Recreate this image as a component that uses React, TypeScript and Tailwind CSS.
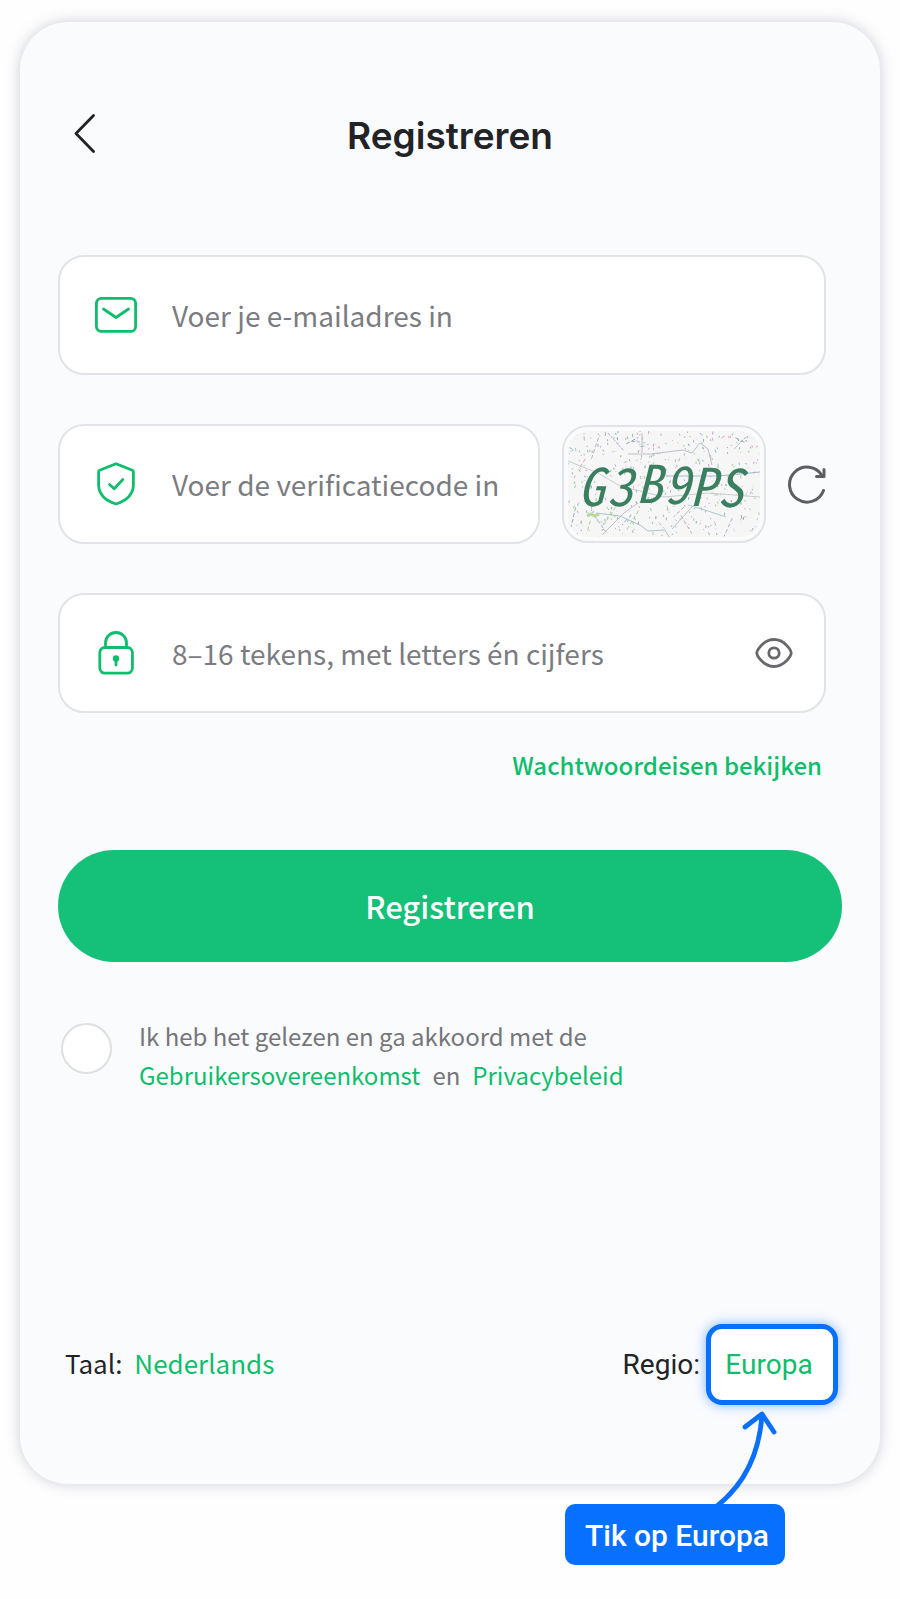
import { useMemo, useState } from 'react';
import type { ReactNode } from 'react';

const CAPTCHA_CODE = 'G3B9PS';
const SPECK_COLORS = ['#8fc7b4', '#b9a8cf', '#b3b8bd', '#8fb6c4', '#d3a9bf', '#a9cf9b', '#8aa39e'];

// small seeded generator so the noise stays the same between renders
function createRandom(seed: number) {
  let state = seed;
  return () => {
    state = (state * 1664525 + 1013904223) % 4294967296;
    return state / 4294967296;
  };
}

function MailIcon() {
  return (
    <svg className="h-11 w-11" viewBox="0 0 44 44" fill="none" stroke="currentColor" strokeWidth="2.8" strokeLinecap="round" strokeLinejoin="round">
      <rect x="2.4" y="5.4" width="39.2" height="33" rx="5" />
      <path d="M9.5 16 L22 24.5 L34.5 16" />
    </svg>
  );
}

function ShieldIcon() {
  return (
    <svg className="h-11 w-11" viewBox="0 0 44 44" fill="none" stroke="currentColor" strokeWidth="2.8" strokeLinecap="round" strokeLinejoin="round">
      <path d="M22 1.8 L38.4 8.2 Q39.4 8.8 39.4 10 V22.5 C39.4 32 33 38.5 22 42 C11 38.5 4.6 32 4.6 22.5 V10 Q4.6 8.8 5.6 8.2 Z" />
      <path d="M15.5 22.5 L20.2 26.8 L28.8 17.5" />
    </svg>
  );
}

function LockIcon() {
  return (
    <svg className="h-11 w-11" viewBox="0 0 44 44" fill="none" stroke="currentColor" strokeWidth="2.8" strokeLinecap="round" strokeLinejoin="round">
      <path d="M11.5 16.5 V12 A10.5 10.5 0 0 1 32.5 12 V16.5" />
      <rect x="5.8" y="16.5" width="32.6" height="25.6" rx="5" />
      <circle cx="22" cy="27.5" r="3.2" fill="currentColor" stroke="none" />
      <path d="M22 28 V34" />
    </svg>
  );
}

function EyeIcon() {
  return (
    <svg className="h-10 w-10" viewBox="0 0 40 40" fill="none" stroke="currentColor" strokeWidth="2.8" strokeLinejoin="round">
      <path d="M2.8 20 C2.8 17.8 9 6.5 20 6.5 C31 6.5 37.2 17.8 37.2 20 C37.2 22.2 31 33.5 20 33.5 C9 33.5 2.8 22.2 2.8 20 Z" />
      <circle cx="20" cy="20" r="5.2" />
    </svg>
  );
}

function RefreshIcon() {
  return (
    <svg className="h-10 w-[38px]" viewBox="0 0 38 40" fill="none" stroke="currentColor" strokeWidth="3" strokeLinecap="round" strokeLinejoin="round">
      <path d="M35.5 26.5 A17.5 17.5 0 1 1 34 11.5" />
      <path d="M36 5.5 V12.5 H28.5" />
    </svg>
  );
}

function Captcha() {
  const { specks, scratches } = useMemo(() => {
    const random = createRandom(73);
    return {
      specks: Array.from({ length: 420 }, () => ({
        x: random() * 192,
        y: random() * 106,
        dx: random() * 2 - 1,
        dy: random() * 3,
        color: SPECK_COLORS[Math.floor(random() * SPECK_COLORS.length)],
      })),
      scratches: Array.from({ length: 26 }, () => ({
        x: random() * 180,
        y: random() * 96,
        dx: random() * 24 - 12,
        dy: random() * 30 - 8,
        color: SPECK_COLORS[Math.floor(random() * SPECK_COLORS.length)],
      })),
    };
  }, []);

  return (
    <div className="h-[118px] w-[204px] rounded-[26px] border-2 border-[#e2e4e8] bg-[#fbfbfc] p-1">
      <svg className="h-full w-full rounded-[20px] bg-[#f6f6f6]" viewBox="0 0 192 106" role="img" aria-label={CAPTCHA_CODE}>
        {specks.map((s, i) => (
          <path key={i} d={`M${s.x} ${s.y} l${s.dx} ${s.dy}`} stroke={s.color} strokeWidth="1" />
        ))}
        {scratches.map((s, i) => (
          <path key={i} d={`M${s.x} ${s.y} l${s.dx} ${s.dy}`} stroke={s.color} strokeWidth="1" strokeDasharray="4 2" />
        ))}
        <g fill="none" strokeWidth="0.9">
          <path d="M60 23 L83 23 L115 19 L124 22 M74 2 V22 M124 22 L132 12 L140 18 L144 34" stroke="#b9b7c2" />
          <path d="M28 82 L52 85 L72 94 L80 100 L97 99 L101 106" stroke="#9fc4c2" />
          <path d="M34 104 L56 82 L70 72 M104 98 L122 78 L134 66" stroke="#b9b7c9" />
          <path d="M0 30 L30 42 L52 55 L96 66 L140 62 L192 66" stroke="#c4c8c5" />
          <path d="M98 45 H150 L192 41" stroke="#a5abc9" />
          <path d="M120 74 L140 80 L158 86" stroke="#9fc8c9" />
          <path d="M40 2 L56 20 M178 6 L166 18" stroke="#b3a3cc" strokeDasharray="3 1" />
        </g>
        <path d="M19 85 l4 -2 l4 2 l4 -2" stroke="#b4dba0" strokeWidth="3" fill="none" />
        <text
          className="font-['Noto_Sans_Mono_CJK_SC','DejaVu_Sans_Mono',monospace] text-[52px] italic"
          x="10 39 68 96 122 149"
          y="75 75 72 73 75 76"
          fill="#3a7f60"
        >
          {CAPTCHA_CODE}
        </text>
      </svg>
    </div>
  );
}

type FieldProps = {
  id: string;
  label: string;
  icon: ReactNode;
  type?: string;
  className?: string;
  children?: ReactNode;
};

function Field({ id, label, icon, type = 'text', className = '', children }: FieldProps) {
  const [value, setValue] = useState('');
  return (
    <div className={`flex h-[120px] items-center rounded-[26px] border-2 border-[#e2e3e6] bg-white pl-[34px] ${className}`}>
      <label htmlFor={id} aria-label={label} className="shrink-0 text-[#0fbd6c]">
        {icon}
      </label>
      <input
        id={id}
        type={type}
        placeholder={label}
        value={value}
        onChange={(event) => setValue(event.target.value)}
        className="ml-[34px] h-full min-w-0 flex-1 bg-transparent text-[28px] text-[#222327] outline-none placeholder:text-[#7b7c81] placeholder:opacity-100"
      />
      {children}
    </div>
  );
}

export default function App() {
  const [showPassword, setShowPassword] = useState(false);
  const [accepted, setAccepted] = useState(false);

  return (
    <div className="min-h-screen bg-[#fefefe] px-5 pt-[22px] pb-[115px] font-['Noto_Sans_CJK_SC',sans-serif] text-[#222327]">
      <main className="rounded-[48px] bg-[#fafbfd] px-[38px] pt-[86px] pb-[79px] shadow-[0_0_14px_rgba(80,80,120,0.28)]">
        <header className="grid h-12 grid-cols-[1fr_auto_1fr] items-center">
          <button type="button" aria-label="Terug" className="justify-self-start pl-3">
            <svg className="h-11 w-8" viewBox="0 0 32 44" fill="none" stroke="currentColor" strokeWidth="2.8" strokeLinecap="round" strokeLinejoin="round">
              <path d="M23.5 1.5 L6 19.5 L23.5 37.5" />
            </svg>
          </button>
          <h1 className="font-['Inter',sans-serif] text-[37px] font-semibold">Registreren</h1>
        </header>

        <form className="mt-[99px]" onSubmit={(event) => event.preventDefault()}>
          <div className="mr-4 space-y-[49px]">
            <Field id="email" type="email" label="Voer je e-mailadres in" icon={<MailIcon />} />
            <div className="flex items-center">
              <Field id="code" label="Voer de verificatiecode in" icon={<ShieldIcon />} className="min-w-0 flex-1" />
              <div className="ml-[22px] shrink-0">
                <Captcha />
              </div>
              <button type="button" aria-label="Vernieuwen" className="ml-[22px] shrink-0 text-[#5d5e62]">
                <RefreshIcon />
              </button>
            </div>
            <Field
              id="password"
              type={showPassword ? 'text' : 'password'}
              label="8–16 tekens, met letters én cijfers"
              icon={<LockIcon />}
            >
              <button
                type="button"
                aria-label="Wachtwoord tonen"
                className="mr-[30px] text-[#68696d]"
                onClick={() => setShowPassword(!showPassword)}
              >
                <EyeIcon />
              </button>
            </Field>
          </div>

          <div className="mt-8 mr-5 flex justify-end">
            <a href="#eisen" className="text-[24px] leading-10 font-medium text-[#0fbd6c]">
              Wachtwoordeisen bekijken
            </a>
          </div>

          <button type="submit" className="mt-[65px] h-28 w-full rounded-full bg-[#15c079] text-[31px] font-medium text-white">
            Registreren
          </button>

          <div className="mt-[54px] flex items-start text-[24px] leading-[39px] text-[#75767a]">
            <input
              id="terms"
              type="checkbox"
              checked={accepted}
              onChange={(event) => setAccepted(event.target.checked)}
              className="mt-[7px] ml-[3px] h-[51px] w-[51px] shrink-0 appearance-none rounded-full border-2 border-[#dedfe1] bg-white checked:bg-[#15c079]"
            />
            <div className="ml-[27px]">
              <label htmlFor="terms">Ik heb het gelezen en ga akkoord met de</label>
              <div className="flex gap-3">
                <a href="#overeenkomst" className="text-[#0fbd6c]">Gebruikersovereenkomst</a>
                <span>en</span>
                <a href="#privacy" className="text-[#0fbd6c]">Privacybeleid</a>
              </div>
            </div>
          </div>
        </form>

        <footer className="mt-[230px] flex items-center justify-between pr-1 pl-[7px]">
          <div className="flex gap-3 pb-1 text-[26px]">
            <span>Taal:</span>
            <button type="button" className="text-[#0fbd6c]">Nederlands</button>
          </div>
          <div className="flex items-center gap-1.5 font-['Roboto',sans-serif] text-[28px]">
            <span>Regio:</span>
            <div className="relative">
              <button
                type="button"
                className="h-[81px] w-[132px] rounded-2xl border-[5px] border-[#0870ff] bg-white pr-1.5 text-[#0fbd6c] shadow-[0_0_12px_rgba(8,112,255,0.5)]"
              >
                Europa
              </button>
              {/* hint that hangs below the region button */}
              <div className="absolute top-full right-[53px] flex flex-col items-end">
                <svg className="-mr-1 h-[99px] w-20" viewBox="0 0 80 99" fill="none" stroke="#0870ff" strokeWidth="4.8" strokeLinecap="round" strokeLinejoin="round">
                  <path d="M8 101 C32 82 50 53 53 10" />
                  <path d="M36 22 L53 9 L65 27" />
                </svg>
                <div className="h-[61px] rounded-[10px] bg-[#0870ff] pr-4 pl-5 text-[30px] leading-[63px] font-medium whitespace-nowrap text-white">
                  Tik op Europa
                </div>
              </div>
            </div>
          </div>
        </footer>
      </main>
    </div>
  );
}
